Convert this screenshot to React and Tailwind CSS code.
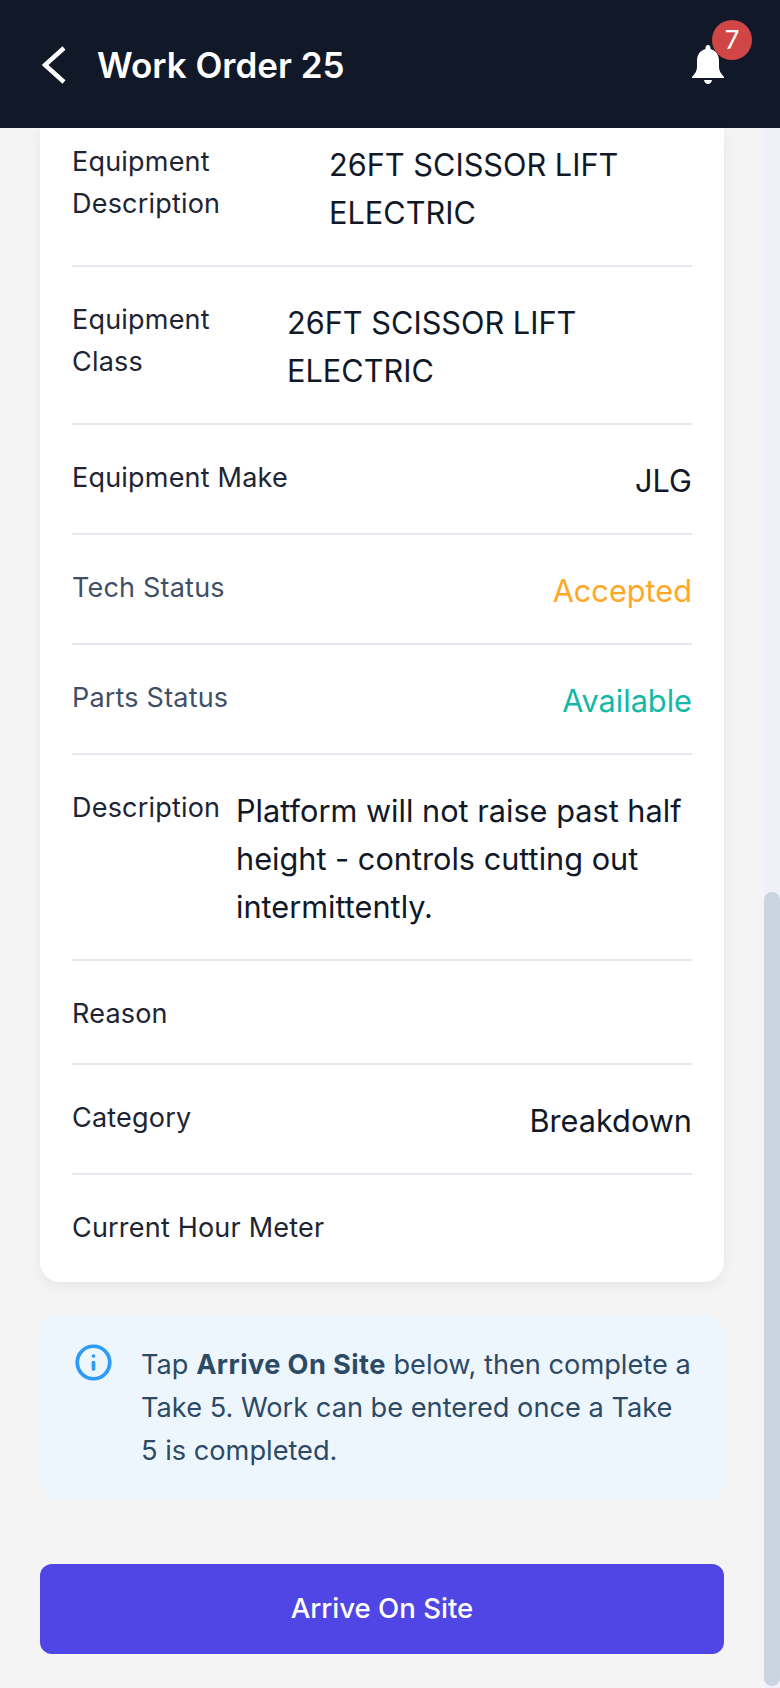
import React from "react";
import { Info } from "lucide-react";

function Row({ label, value, labelClass = "text-[#1e2433]", valueClass = "text-[#111827]", labelW = "", valueW = "", pad = "pt-[32px] pb-[28px]", border = true }) {
  return (
    <div className={`flex items-start justify-between ${pad} ${border ? "border-b-2 border-[#e5e7f0]" : ""}`}>
      <div className={`text-[27px] leading-[42px] tracking-[0.2px] ${labelClass} ${labelW}`}>{label}</div>
      {value ? <div className={`text-[30.7px] leading-[48px] ${valueClass} ${valueW}`}>{value}</div> : null}
    </div>
  );
}

export default function App() {
  return (
    <div className="w-[780px] h-[1688px] overflow-hidden flex flex-col bg-[#f4f4f4] font-['Inter',sans-serif]">
      <header className="h-[128px] shrink-0 bg-[#111827] flex items-start justify-between pl-[42px] pr-[56px]">
        <div className="flex items-center mt-[45px] gap-[31px]">
          <svg width="24" height="38" viewBox="0 0 24 38" fill="none">
            <path d="M22 2 L3 19 L22 36" stroke="#ffffff" strokeWidth="4.5" />
          </svg>
          <h1 className="text-[35px] leading-[40px] font-semibold text-white">Work Order 25</h1>
        </div>
        <div className="relative mt-[45px]">
          <svg width="32" height="39" viewBox="0 0 32 39" fill="#ffffff" className="block">
            <path d="M16 0 C14.5 0 13.5 1.2 13.5 3 L13.5 4 C8 5.5 5 10 5 16 L5 22 C5 26 3 28.5 0 32 L0 33 L32 33 L32 32 C29 28.5 27 26 27 22 L27 16 C27 10 24 5.5 18.5 4 L18.5 3 C18.5 1.2 17.5 0 16 0 Z M12 35 L20 35 C19.5 37.5 18 39 16 39 C14 39 12.5 37.5 12 35 Z" />
          </svg>
          <span className="absolute -top-[25px] left-[20px] w-[40px] h-[40px] rounded-full bg-[#d04545] text-white text-[26px] leading-[40px] text-center">7</span>
        </div>
      </header>
      <div className="flex flex-1 min-h-0">
        <main className="w-[764px] px-[40px]">
          <section className="bg-white rounded-b-[20px] px-[32px] pb-[33px] shadow-[0_4px_14px_rgba(0,0,0,0.06)]">
            <Row label="Equipment Description" value="26FT SCISSOR LIFT ELECTRIC" labelW="w-[200px]" valueW="w-[363px]" pad="pt-[13px] pb-[28px]" />
            <Row label="Equipment Class" value="26FT SCISSOR LIFT ELECTRIC" labelW="w-[200px]" valueW="w-[405px]" />
            <Row label="Equipment Make" value="JLG" />
            <Row label="Tech Status" value="Accepted" labelClass="text-[#3f4f66]" valueClass="text-[#ffa826]" />
            <Row label="Parts Status" value="Available" labelClass="text-[#3f4f66]" valueClass="text-[#14b8a6]" />
            <Row label="Description" value="Platform will not raise past half height - controls cutting out intermittently." labelW="w-[160px]" valueW="w-[456px]" />
            <Row label="Reason" />
            <Row label="Category" value="Breakdown" />
            <Row label="Current Hour Meter" pad="pt-[32px] pb-0" border={false} />
          </section>
          <section className="mt-[32px] h-[185px] rounded-[20px] bg-[#eef6fd] pl-[34px] pt-[30px] flex gap-[28px]">
            <Info size={39} strokeWidth={2.3} className="shrink-0 text-[#2e9bf5] -mt-[1.5px]" />
            <p className="w-[551px] text-[27.2px] leading-[43px] text-[#2c4a66] -mt-[1px]">
              Tap <b className="font-bold tracking-[0.4px]">Arrive On Site</b> below, then complete a Take 5. Work can be entered once a Take 5 is completed.
            </p>
          </section>
          <button className="mt-[65px] w-full h-[90px] rounded-[12px] bg-[#4f46e5] text-white text-[27.6px] font-medium">Arrive On Site</button>
        </main>
        <aside className="w-[16px] bg-[#eef2f8] pt-[764px] pb-[2px]">
          <div className="h-full bg-[#cbd5e1] rounded-[8px]" />
        </aside>
      </div>
    </div>
  );
}
